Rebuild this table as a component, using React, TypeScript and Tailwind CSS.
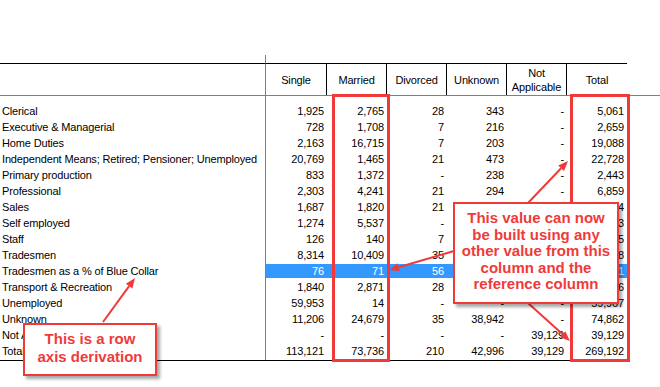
import React from 'react';

const columns = ['Single', 'Married', 'Divorced', 'Unknown', 'Not Applicable', 'Total'];

const rows: { label: string; values: string[]; selected?: boolean }[] = [
  { label: 'Clerical', values: ['1,925', '2,765', '28', '343', '-', '5,061'] },
  { label: 'Executive & Managerial', values: ['728', '1,708', '7', '216', '-', '2,659'] },
  { label: 'Home Duties', values: ['2,163', '16,715', '7', '203', '-', '19,088'] },
  { label: 'Independent Means; Retired; Pensioner; Unemployed', values: ['20,769', '1,465', '21', '473', '-', '22,728'] },
  { label: 'Primary production', values: ['833', '1,372', '-', '238', '-', '2,443'] },
  { label: 'Professional', values: ['2,303', '4,241', '21', '294', '-', '6,859'] },
  { label: 'Sales', values: ['1,687', '1,820', '21', '146', '-', '3,674'] },
  { label: 'Self employed', values: ['1,274', '5,537', '-', '2', '-', '6,813'] },
  { label: 'Staff', values: ['126', '140', '7', '2', '-', '275'] },
  { label: 'Tradesmen', values: ['8,314', '10,409', '35', '40', '-', '18,798'] },
  { label: 'Tradesmen as a % of Blue Collar', values: ['76', '71', '56', '61', '-', '71'], selected: true },
  { label: 'Transport & Recreation', values: ['1,840', '2,871', '28', '57', '-', '4,796'] },
  { label: 'Unemployed', values: ['59,953', '14', '-', '-', '-', '59,967'] },
  { label: 'Unknown', values: ['11,206', '24,679', '35', '38,942', '-', '74,862'] },
  { label: 'Not Applicable', values: ['-', '-', '-', '-', '39,129', '39,129'] },
  { label: 'Total', values: ['113,121', '73,736', '210', '42,996', '39,129', '269,192'] },
];

// line + filled head, tip at (x2, y2)
const Arrow = ({ x1, y1, x2, y2 }: { x1: number; y1: number; x2: number; y2: number }) => {
  const len = Math.hypot(x2 - x1, y2 - y1);
  const dx = (x2 - x1) / len;
  const dy = (y2 - y1) / len;
  const bx = x2 - dx * 10;
  const by = y2 - dy * 10;
  const px = -dy * 4;
  const py = dx * 4;
  return (
    <g>
      <line x1={x1} y1={y1} x2={bx} y2={by} stroke="#f03a3a" strokeWidth={2} />
      <polygon points={`${x2},${y2} ${bx + px},${by + py} ${bx - px},${by - py}`} fill="#f03a3a" />
    </g>
  );
};

export default function App() {
  return (
    <div className="relative w-[660px] h-[387px] overflow-hidden bg-white font-['Liberation_Sans',Arial,sans-serif] text-[11px] tracking-[-0.15px] text-black">
      <div className="h-[55px]" />
      <div className="flex h-[8px]">
        <div className="w-[266px] border-r border-[#808080]" />
      </div>

      {/* header */}
      <div className="flex h-[33px] border-b border-[#808080]">
        <div className="w-[266px] border-t border-t-black border-r border-r-[#808080]" />
        {columns.map((c, i) => (
          <div
            key={c}
            className={`${i === 0 ? 'w-[61px]' : 'w-[60px]'} flex items-center justify-center text-center leading-[14px] border-t border-black ${i < columns.length - 1 ? 'border-r' : ''}`}
          >
            {c === 'Not Applicable' ? (
              <span>Not<br />Applicable</span>
            ) : (
              c
            )}
          </div>
        ))}
      </div>

      {/* body */}
      <div className="flex w-[627px] border-b border-black">
        <div className="w-[266px] border-r border-[#808080] pt-[7px] pb-[1px]">
          {rows.map(r => (
            <div key={r.label} className="h-[16px] pl-[2px] leading-[16px] whitespace-nowrap">{r.label}</div>
          ))}
        </div>
        <div className="flex-1 pt-[7px] pb-[1px]">
          {rows.map(r => (
            <div key={r.label} className="flex h-[16px] items-center">
              {r.values.map((v, i) => (
                <div
                  key={i}
                  className={`${i === 0 ? 'w-[61px]' : 'w-[60px]'} h-[14px] leading-[14px] pr-[3px] text-right ${r.selected ? 'bg-[#3399ff] text-white' : ''}`}
                >
                  {v}
                </div>
              ))}
            </div>
          ))}
        </div>
      </div>

      {/* highlight boxes on Married and Total */}
      <div className="absolute left-[332px] top-[94px] w-[58px] h-[268px] border-[3px] border-[#f03a3a]" />
      <div className="absolute left-[570px] top-[94px] w-[60px] h-[268px] border-[3px] border-[#f03a3a]" />

      <svg className="absolute left-0 top-0 pointer-events-none" width={660} height={387}>
        <Arrow x1={103} y1={322} x2={135} y2={278} />
        <Arrow x1={528} y1={203} x2={568} y2={161} />
        <Arrow x1={454} y1={251} x2={389} y2={270} />
        <Arrow x1={528} y1={303} x2={570} y2={341} />
      </svg>

      {/* callouts */}
      <div className="absolute left-[453px] top-[202px] w-[166px] h-[102px] border-2 border-[#f03a3a] bg-white shadow-[3px_3px_3px_rgba(0,0,0,0.35)] pt-[6px] text-center text-[15px] leading-[16.5px] tracking-normal font-bold text-[#f03a3a]">
        This value can now<br />
        be built using any<br />
        other value from this<br />
        column and the<br />
        reference column
      </div>
      <div className="absolute left-[23px] top-[323px] w-[134px] h-[53px] border-2 border-[#f03a3a] bg-white shadow-[3px_3px_3px_rgba(0,0,0,0.35)] pt-[5px] text-center text-[15px] leading-[18px] tracking-normal font-bold text-[#f03a3a]">
        This is a row<br />
        axis derivation
      </div>
    </div>
  );
}
